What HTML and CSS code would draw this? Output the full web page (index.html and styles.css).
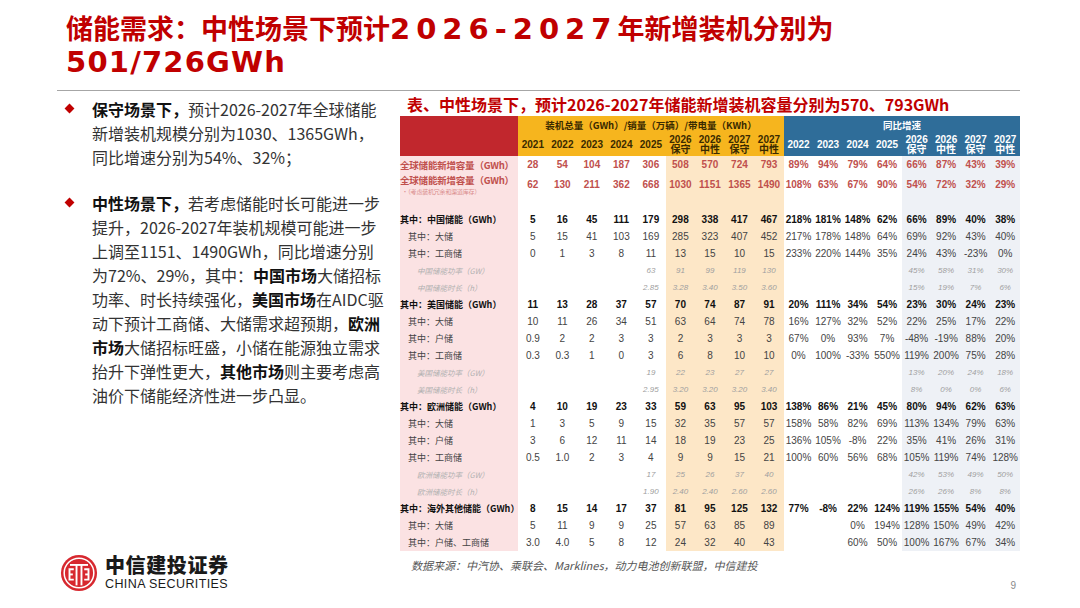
FILE: index.html
```html
<!DOCTYPE html>
<html lang="zh-CN">
<head>
<meta charset="utf-8">
<title>储能需求</title>
<link rel="stylesheet" href="styles.css">
</head>
<body>
<div class="slide">
  <h1 class="title">储能需求：中性场景下预计<span class="hand">2026-2027</span>年新增装机分别为<br><span class="hand hand2">501/726GWh</span></h1>
  <div class="rule"></div>
  <div class="main">
    <div class="left">
      <div class="bullets">
        <p class="bullet"><b>保守场景下，</b>预计2026-2027年全球储能<br>新增装机规模分别为1030、1365GWh，<br>同比增速分别为54%、32%；</p>
        <p class="bullet second"><b>中性场景下，</b>若考虑储能时长可能进一步<br>提升，2026-2027年装机规模可能进一步<br>上调至1151、1490GWh，同比增速分别<br>为72%、29%，其中：<b>中国市场</b>大储招标<br>功率、时长持续强化，<b>美国市场</b>在AIDC驱<br>动下预计工商储、大储需求超预期，<b>欧洲<br>市场</b>大储招标旺盛，小储在能源独立需求<br>抬升下弹性更大，<b>其他市场</b>则主要考虑高<br>油价下储能经济性进一步凸显。</p>
      </div>
      <div class="logo">
        <svg class="logo-mark" viewBox="-20 -20 40 40" width="38" height="38">
          <circle r="19" fill="#d7282f"/>
          <circle r="15.6" fill="none" stroke="#fff" stroke-width="1.6"/>
          <g fill="none" stroke="#fff" stroke-width="2" stroke-linecap="butt">
            <path d="M-9.5 -8.5 H9.5"/>
            <path d="M-2.6 -8.5 V13"/>
            <path d="M2.6 -8.5 V13"/>
            <path d="M-5.5 -4 H-10 V7 H-5.5"/>
            <path d="M5.5 -4 H10 V7 H5.5"/>
            <path d="M-10 1.5 H-6.5"/>
            <path d="M10 1.5 H6.5"/>
          </g>
        </svg>
        <div class="logo-text">
          <span class="logo-cn">中信建投证券</span>
          <span class="logo-en">CHINA SECURITIES</span>
        </div>
      </div>
    </div>
    <div class="right">
      <h2 class="tbl-title">表、中性场景下，预计2026-2027年储能新增装机容量分别为570、793GWh</h2>
      <table class="data">
        <colgroup>
          <col class="c-lab">
          <col class="c-n"><col class="c-n"><col class="c-n"><col class="c-n"><col class="c-n">
          <col class="c-n c-fc"><col class="c-n c-fc"><col class="c-n c-fc"><col class="c-n c-fc">
          <col class="c-n"><col class="c-n"><col class="c-n"><col class="c-n">
          <col class="c-n c-pfc"><col class="c-n c-pfc"><col class="c-n c-pfc"><col class="c-n c-pfc">
        </colgroup>
        <thead>
          <tr class="h1">
            <th class="h-lab" rowspan="2"></th>
            <th class="h-or" colspan="9">装机总量（GWh）/销量（万辆）/带电量（KWh）</th>
            <th class="h-bl" colspan="8">同比增速</th>
          </tr>
          <tr class="h2">
            <th class="h-or">2021</th><th class="h-or">2022</th><th class="h-or">2023</th><th class="h-or">2024</th><th class="h-or">2025</th>
            <th class="h-or">2026<br>保守</th><th class="h-or">2026<br>中性</th><th class="h-or">2027<br>保守</th><th class="h-or">2027<br>中性</th>
            <th class="h-bl">2022</th><th class="h-bl">2023</th><th class="h-bl">2024</th><th class="h-bl">2025</th>
            <th class="h-bl">2026<br>保守</th><th class="h-bl">2026<br>中性</th><th class="h-bl">2027<br>保守</th><th class="h-bl">2027<br>中性</th>
          </tr>
        </thead>
        <tbody>
          <tr class="r-tot">
            <td class="lab">全球储能新增容量（GWh）</td>
            <td>28</td><td>54</td><td>104</td><td>187</td><td>306</td><td>508</td><td>570</td><td>724</td><td>793</td>
            <td>89%</td><td>94%</td><td>79%</td><td>64%</td><td>66%</td><td>87%</td><td>43%</td><td>39%</td>
          </tr>
          <tr class="r-tot r-tot2">
            <td class="lab">全球储能新增容量（GWh）<span class="note">·（考虑装机冗余和渠道库存）</span></td>
            <td>62</td><td>130</td><td>211</td><td>362</td><td>668</td><td>1030</td><td>1151</td><td>1365</td><td>1490</td>
            <td>108%</td><td>63%</td><td>67%</td><td>90%</td><td>54%</td><td>72%</td><td>32%</td><td>29%</td>
          </tr>
          <tr class="r-gap"><td></td><td></td><td></td><td></td><td></td><td></td><td></td><td></td><td></td><td></td><td></td><td></td><td></td><td></td><td></td><td></td><td></td><td></td></tr>

          <tr class="r-main">
            <td class="lab">其中：中国储能（GWh）</td>
            <td>5</td><td>16</td><td>45</td><td>111</td><td>179</td><td>298</td><td>338</td><td>417</td><td>467</td>
            <td>218%</td><td>181%</td><td>148%</td><td>62%</td><td>66%</td><td>89%</td><td>40%</td><td>38%</td>
          </tr>
          <tr class="r-sub">
            <td class="lab">其中：大储</td>
            <td>5</td><td>15</td><td>41</td><td>103</td><td>169</td><td>285</td><td>323</td><td>407</td><td>452</td>
            <td>217%</td><td>178%</td><td>148%</td><td>64%</td><td>69%</td><td>92%</td><td>43%</td><td>40%</td>
          </tr>
          <tr class="r-sub">
            <td class="lab">其中：工商储</td>
            <td>0</td><td>1</td><td>3</td><td>8</td><td>11</td><td>13</td><td>15</td><td>10</td><td>15</td>
            <td>233%</td><td>220%</td><td>144%</td><td>35%</td><td>24%</td><td>43%</td><td>-23%</td><td>0%</td>
          </tr>
          <tr class="r-it">
            <td class="lab">中国储能功率（GW）</td>
            <td></td><td></td><td></td><td></td><td>63</td><td>91</td><td>99</td><td>119</td><td>130</td>
            <td></td><td></td><td></td><td></td><td>45%</td><td>58%</td><td>31%</td><td>30%</td>
          </tr>
          <tr class="r-it">
            <td class="lab">中国储能时长（h）</td>
            <td></td><td></td><td></td><td></td><td>2.85</td><td>3.28</td><td>3.40</td><td>3.50</td><td>3.60</td>
            <td></td><td></td><td></td><td></td><td>15%</td><td>19%</td><td>7%</td><td>6%</td>
          </tr>

          <tr class="r-main">
            <td class="lab">其中：美国储能（GWh）</td>
            <td>11</td><td>13</td><td>28</td><td>37</td><td>57</td><td>70</td><td>74</td><td>87</td><td>91</td>
            <td>20%</td><td>111%</td><td>34%</td><td>54%</td><td>23%</td><td>30%</td><td>24%</td><td>23%</td>
          </tr>
          <tr class="r-sub">
            <td class="lab">其中：大储</td>
            <td>10</td><td>11</td><td>26</td><td>34</td><td>51</td><td>63</td><td>64</td><td>74</td><td>78</td>
            <td>16%</td><td>127%</td><td>32%</td><td>52%</td><td>22%</td><td>25%</td><td>17%</td><td>22%</td>
          </tr>
          <tr class="r-sub">
            <td class="lab">其中：户储</td>
            <td>0.9</td><td>2</td><td>2</td><td>3</td><td>3</td><td>2</td><td>3</td><td>3</td><td>3</td>
            <td>67%</td><td>0%</td><td>93%</td><td>7%</td><td>-48%</td><td>-19%</td><td>88%</td><td>20%</td>
          </tr>
          <tr class="r-sub">
            <td class="lab">其中：工商储</td>
            <td>0.3</td><td>0.3</td><td>1</td><td>0</td><td>3</td><td>6</td><td>8</td><td>10</td><td>10</td>
            <td>0%</td><td>100%</td><td>-33%</td><td>550%</td><td>119%</td><td>200%</td><td>75%</td><td>28%</td>
          </tr>
          <tr class="r-it">
            <td class="lab">美国储能功率（GW）</td>
            <td></td><td></td><td></td><td></td><td>19</td><td>22</td><td>23</td><td>27</td><td>27</td>
            <td></td><td></td><td></td><td></td><td>13%</td><td>20%</td><td>24%</td><td>18%</td>
          </tr>
          <tr class="r-it">
            <td class="lab">美国储能时长（h）</td>
            <td></td><td></td><td></td><td></td><td>2.95</td><td>3.20</td><td>3.20</td><td>3.20</td><td>3.40</td>
            <td></td><td></td><td></td><td></td><td>8%</td><td>0%</td><td>0%</td><td>6%</td>
          </tr>

          <tr class="r-main">
            <td class="lab">其中：欧洲储能（GWh）</td>
            <td>4</td><td>10</td><td>19</td><td>23</td><td>33</td><td>59</td><td>63</td><td>95</td><td>103</td>
            <td>138%</td><td>86%</td><td>21%</td><td>45%</td><td>80%</td><td>94%</td><td>62%</td><td>63%</td>
          </tr>
          <tr class="r-sub">
            <td class="lab">其中：大储</td>
            <td>1</td><td>3</td><td>5</td><td>9</td><td>15</td><td>32</td><td>35</td><td>57</td><td>57</td>
            <td>158%</td><td>58%</td><td>82%</td><td>69%</td><td>113%</td><td>134%</td><td>79%</td><td>63%</td>
          </tr>
          <tr class="r-sub">
            <td class="lab">其中：户储</td>
            <td>3</td><td>6</td><td>12</td><td>11</td><td>14</td><td>18</td><td>19</td><td>23</td><td>25</td>
            <td>136%</td><td>105%</td><td>-8%</td><td>22%</td><td>35%</td><td>41%</td><td>26%</td><td>31%</td>
          </tr>
          <tr class="r-sub">
            <td class="lab">其中：工商储</td>
            <td>0.5</td><td>1.0</td><td>2</td><td>3</td><td>4</td><td>9</td><td>9</td><td>15</td><td>21</td>
            <td>100%</td><td>60%</td><td>56%</td><td>68%</td><td>105%</td><td>119%</td><td>74%</td><td>128%</td>
          </tr>
          <tr class="r-it">
            <td class="lab">欧洲储能功率（GW）</td>
            <td></td><td></td><td></td><td></td><td>17</td><td>25</td><td>26</td><td>37</td><td>40</td>
            <td></td><td></td><td></td><td></td><td>42%</td><td>53%</td><td>49%</td><td>50%</td>
          </tr>
          <tr class="r-it">
            <td class="lab">欧洲储能时长（h）</td>
            <td></td><td></td><td></td><td></td><td>1.90</td><td>2.40</td><td>2.40</td><td>2.60</td><td>2.60</td>
            <td></td><td></td><td></td><td></td><td>26%</td><td>26%</td><td>8%</td><td>8%</td>
          </tr>

          <tr class="r-main">
            <td class="lab">其中：海外其他储能（GWh）</td>
            <td>8</td><td>15</td><td>14</td><td>17</td><td>37</td><td>81</td><td>95</td><td>125</td><td>132</td>
            <td>77%</td><td>-8%</td><td>22%</td><td>124%</td><td>119%</td><td>155%</td><td>54%</td><td>40%</td>
          </tr>
          <tr class="r-sub">
            <td class="lab">其中：大储</td>
            <td>5</td><td>11</td><td>9</td><td>9</td><td>25</td><td>57</td><td>63</td><td>85</td><td>89</td>
            <td></td><td></td><td>0%</td><td>194%</td><td>128%</td><td>150%</td><td>49%</td><td>42%</td>
          </tr>
          <tr class="r-sub">
            <td class="lab">其中：户储、工商储</td>
            <td>3.0</td><td>4.0</td><td>5</td><td>8</td><td>12</td><td>24</td><td>32</td><td>40</td><td>43</td>
            <td></td><td></td><td>60%</td><td>50%</td><td>100%</td><td>167%</td><td>67%</td><td>34%</td>
          </tr>
        </tbody>
      </table>
      <p class="source">数据来源：中汽协、乘联会、Marklines，动力电池创新联盟，中信建投</p>
      <p class="page-num">9</p>
    </div>
  </div>
</div>
</body>
</html>
```
FILE: styles.css
```css
* { box-sizing: border-box; margin: 0; padding: 0; }
html, body { width: 1080px; height: 608px; overflow: hidden; background: #fff; }
body { font-family: "Noto Sans CJK SC", "Noto Sans", sans-serif; color: #333; }

.slide { display: flex; flex-direction: column; height: 608px; }

.title {
  padding: 12px 0 0 66px;
  height: 76px;
  font-size: 27px;
  line-height: 32px;
  font-weight: 700;
  color: #c00000;
  white-space: nowrap;
}
.hand {
  font-family: "DejaVu Sans", sans-serif;
  font-weight: 700;
  font-size: 29px;
  letter-spacing: 6px;
}
.hand2 { letter-spacing: 1.2px; }

.rule { margin: 14px 0 0 57px; width: 963px; height: 1px; background: #a6a6a6; }

.main { flex: 1; display: flex; }

.left {
  width: 343px;
  margin-left: 57px;
  display: flex;
  flex-direction: column;
  justify-content: space-between;
  padding: 6px 0 16px;
}
.bullet {
  position: relative;
  padding-left: 35px;
  font-size: 16px;
  line-height: 24px;
  color: #333;
  white-space: nowrap;
}
.bullet::before {
  content: "";
  position: absolute;
  left: 9px;
  top: 8px;
  width: 7px;
  height: 7px;
  background: #c00000;
  transform: rotate(45deg);
}
.bullet b { color: #111; font-weight: 700; }
.bullet.second { margin-top: 22px; }

.logo { display: flex; align-items: center; gap: 7px; margin-left: 3px; }
.logo-mark { display: block; }
.logo-text { display: flex; flex-direction: column; }
.logo-cn {
  font-size: 20px;
  line-height: 22px;
  font-weight: 900;
  color: #1a1a1a;
  letter-spacing: 0.6px;
}
.logo-en {
  font-family: "Liberation Sans", "Noto Sans", sans-serif;
  font-size: 12.5px;
  line-height: 16px;
  color: #1a1a1a;
  letter-spacing: 0.4px;
}

.right { width: 620px; padding-top: 1px; display: flex; flex-direction: column; }
.tbl-title {
  padding-left: 7px;
  font-size: 16px;
  line-height: 24px;
  font-weight: 700;
  color: #c00000;
  white-space: nowrap;
}

.data {
  width: 620px;
  table-layout: fixed;
  border-collapse: collapse;
  font-family: "Liberation Sans", "Noto Sans CJK SC", sans-serif;
  font-size: 10px;
  color: #444;
}
.c-lab { width: 118px; background: #fbe2e3; }
.c-n { width: 29.5px; }
.c-fc { background: #fde7c7; }
.c-pfc { background: #eef1f6; }

.data th, .data td { padding: 0; text-align: center; vertical-align: middle; white-space: nowrap; overflow: visible; }
.data th { font-weight: 700; line-height: 10px; }
.h1 { height: 18px; }
.h2 { height: 22px; }
.h-lab { background: #c1272d; }
.h-or { background: #f6b51e; color: #3a2a00; font-size: 9.5px; font-family: "Noto Sans CJK SC", sans-serif; }
.h2 .h-or, .h2 .h-bl { font-family: "Liberation Sans", "Noto Sans CJK SC", sans-serif; font-size: 10px; }
.h-bl { background: #2f6d99; color: #fff; font-size: 9.5px; font-family: "Noto Sans CJK SC", sans-serif; }

.data td.lab {
  text-align: left;
  font-family: "Noto Sans CJK SC", sans-serif;
  font-size: 9px;
  overflow: visible;
}
.data tbody tr { height: 17px; }

.r-tot td { color: #c0504d; font-weight: 700; }
.r-tot td.lab { font-size: 9.5px; letter-spacing: -0.2px; }
.data tbody tr.r-tot2 { height: 23px; }
.r-tot2 td.lab { line-height: 14px; }
.note {
  display: block;
  font-size: 6px;
  line-height: 9px;
  font-weight: 400;
  color: #d98c8c;
  padding-left: 2px;
}
.data tbody tr.r-gap { height: 15px; }

.r-main td { color: #111; font-weight: 700; }
.r-sub td { color: #444; }
.r-sub td.lab { padding-left: 8px; }
.r-it td { color: #a0a0a0; font-style: italic; font-size: 8px; }
.r-it td.lab { padding-left: 17px; color: #b0b0b0; font-size: 7.5px; }

.source {
  margin-top: 5px;
  padding-left: 11px;
  font-size: 11px;
  line-height: 18px;
  font-style: italic;
  color: #555;
}
.page-num {
  margin-top: 5px;
  padding-right: 4px;
  text-align: right;
  font-family: "Liberation Sans", sans-serif;
  font-size: 10px;
  line-height: 14px;
  color: #8a8a8a;
}
```
